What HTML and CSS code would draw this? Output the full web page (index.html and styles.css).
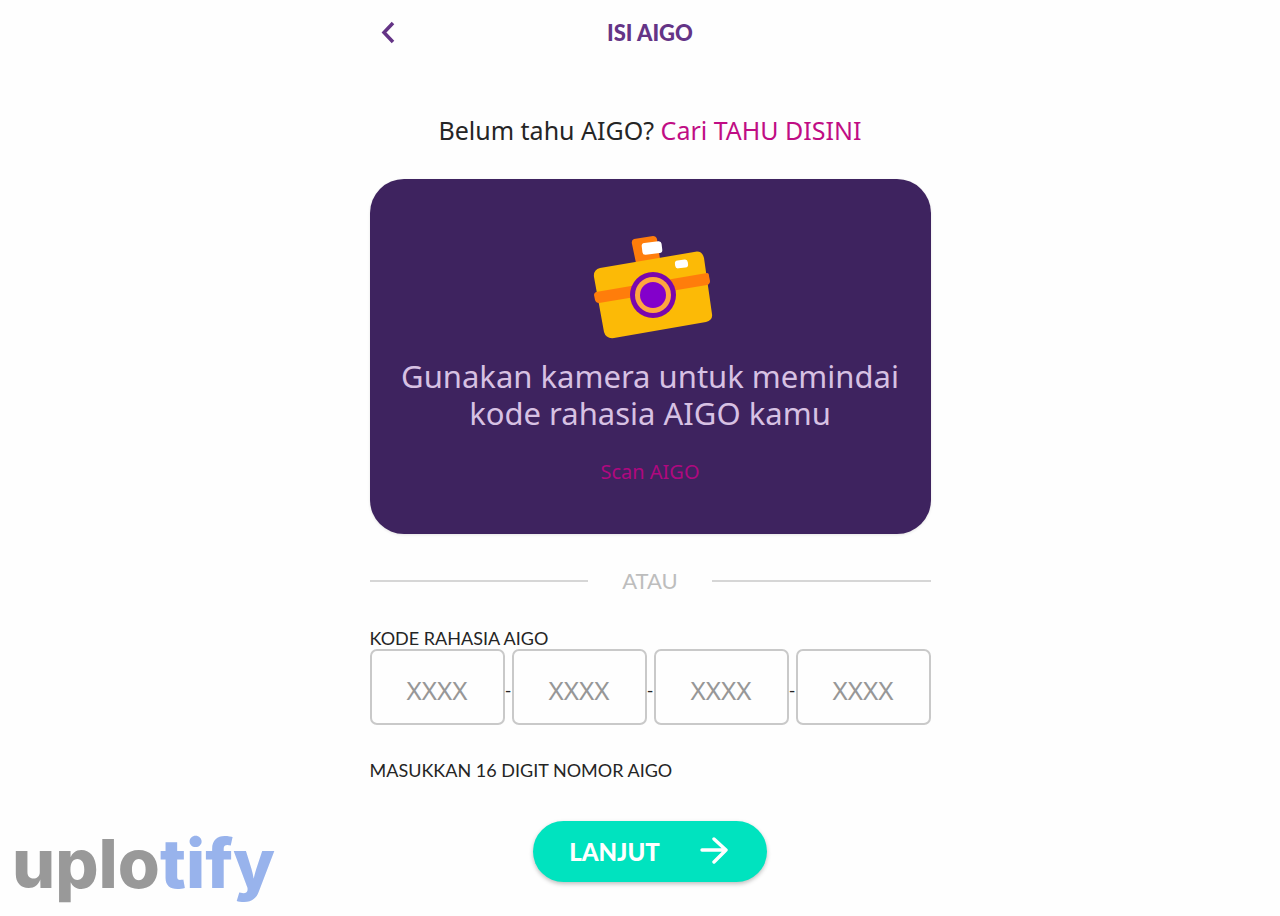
FILE: index.html
```
<!DOCTYPE html>
<html lang="id">
<head>
<meta charset="UTF-8">
<meta name="viewport" content="width=device-width, initial-scale=1">
<title>Isi AIGO</title>
<link rel="stylesheet" href="styles.css">
</head>
<body>
<div class="page">
  <header class="topbar">
    <button type="button" class="back" aria-label="Kembali">
      <svg width="16" height="24" viewBox="0 0 16 24"><path d="M13 3 L4 12.500 L13 22" fill="none" stroke="#643486" stroke-width="3.500"/></svg>
    </button>
    <h1>ISI AIGO</h1>
  </header>
  <main>
    <p class="intro">Belum tahu AIGO? <a href="#">Cari TAHU DISINI</a></p>
    <section class="scan-card">
      <svg class="camera" width="120" height="106" viewBox="0 0 120 106">
        <path d="M41 4 Q38 5 39 9 L43 28 L67 24 L64 4 Q63 1 60 1 Z" fill="#ff7d0b"/>
        <rect x="49" y="7" width="20" height="12" rx="3" fill="#fff" transform="rotate(-7 59 13)"/>
        <path d="M7 33 L101 17 Q109 15 111 23 L119 79 Q120 85 113 87 L21 103 Q13 104 11 97 L1 42 Q0 35 7 33 Z" fill="#fcba06"/>
        <path d="M3 57 L114 38 Q116 38 116 41 L117 46 Q117 49 114 50 L6 68 Q3 68 2 65 L1 60 Q1 58 3 57 Z" fill="#ff7d0b"/>
        <rect x="82" y="25" width="13" height="8" rx="3" fill="#fff" transform="rotate(-7 88 29)"/>
        <circle cx="60" cy="60" r="23" fill="#7a06ae"/>
        <circle cx="60" cy="60" r="18" fill="#ffa63f"/>
        <circle cx="60" cy="60" r="13" fill="#8300cb"/>
      </svg>
      <h2>Gunakan kamera untuk memindai kode rahasia AIGO kamu</h2>
      <a href="#" class="scan-link">Scan AIGO</a>
    </section>
    <div class="divider">ATAU</div>
    <form>
      <label for="code1">KODE RAHASIA AIGO</label>
      <div class="code">
        <input type="text" id="code1" maxlength="4" placeholder="XXXX">
        <span>-</span>
        <input type="text" maxlength="4" placeholder="XXXX" aria-label="Kode bagian 2">
        <span>-</span>
        <input type="text" maxlength="4" placeholder="XXXX" aria-label="Kode bagian 3">
        <span>-</span>
        <input type="text" maxlength="4" placeholder="XXXX" aria-label="Kode bagian 4">
      </div>
      <p class="hint">MASUKKAN 16 DIGIT NOMOR AIGO</p>
      <button type="submit" class="next">
        LANJUT
        <svg width="28" height="32" viewBox="0 0 28 32"><path d="M2 14 H26 M14 3 L26 14 L14 26" fill="none" stroke="#fff" stroke-width="3.400" stroke-linecap="round" stroke-linejoin="round"/></svg>
      </button>
    </form>
  </main>
</div>
<div class="watermark">uplo<span>tify</span></div>
</body>
</html>
```
FILE: styles.css
```
* { box-sizing: border-box; }
body { margin: 0; padding-left: 20px; background: #fefefe; color: #252525; font-family: "Noto Sans", sans-serif; }
.page { max-width: 561px; margin: 0 auto; }
h1, h2, p { margin: 0; }
a { color: #c00d84; text-decoration: none; }
button { border: 0; font-family: inherit; cursor: pointer; }

.topbar { display: grid; grid-template-columns: 36px 1fr 36px; align-items: center; height: 64px; }
.topbar h1 { color: #643486; font-family: Lato, sans-serif; font-size: 22px; font-weight: 900; text-align: center; }
.back { display: flex; justify-content: center; padding: 0; background: none; }

.intro { margin-top: 50px; font-size: 25px; line-height: 32px; text-align: center; }

.scan-card { display: flex; flex-direction: column; align-items: center; margin-top: 33px; padding: 56px 24px 48px; border-radius: 34px; background: #3e235f; box-shadow: 0 1px 3px rgba(0, 0, 0, 0.1); text-align: center; }
.camera { margin-left: 6px; }
.scan-card h2 { margin-top: 17px; color: #d7c1e3; font-size: 31px; font-weight: 400; line-height: 37px; }
.scan-link { margin-top: 26px; color: #b0087f; font-size: 20px; line-height: 28px; }

.divider { display: flex; align-items: center; gap: 34px; margin-top: 33px; color: #bdbdbd; font-family: Lato, sans-serif; font-size: 22px; line-height: 28px; }
.divider::before, .divider::after { content: ""; flex: 1; height: 2px; background: #d6d6d6; }

form { display: flex; flex-direction: column; margin-top: 33px; font-family: Lato, sans-serif; font-size: 18px; }
label { line-height: 21px; }
.code { display: flex; align-items: center; }
.code input { flex: 1; min-width: 0; height: 76px; padding: 6px 0 0; border: 2px solid #c9c9c9; border-radius: 7px; background: #fefefe; color: #252525; font-family: "Noto Sans", sans-serif; font-size: 26px; text-align: center; }
.code input::placeholder { color: #979797; opacity: 1; }
.code span { width: 7px; padding-top: 6px; text-align: center; }
.hint { margin-top: 33px; line-height: 24px; }
.next { display: flex; align-items: center; align-self: center; gap: 40px; height: 61px; margin: 39px 0 32px; padding: 0 39px 0 36px; border-radius: 31px; background: #00e3bf; box-shadow: 0 2px 4px rgba(0, 0, 0, 0.25); color: #fff; font-family: Lato, sans-serif; font-size: 24px; font-weight: 900; }

.watermark { position: absolute; left: 12px; bottom: 13px; color: #999; font-family: Inter, sans-serif; font-size: 68px; font-weight: 800; line-height: 80px; }
.watermark span { color: #98b3ec; }
```
